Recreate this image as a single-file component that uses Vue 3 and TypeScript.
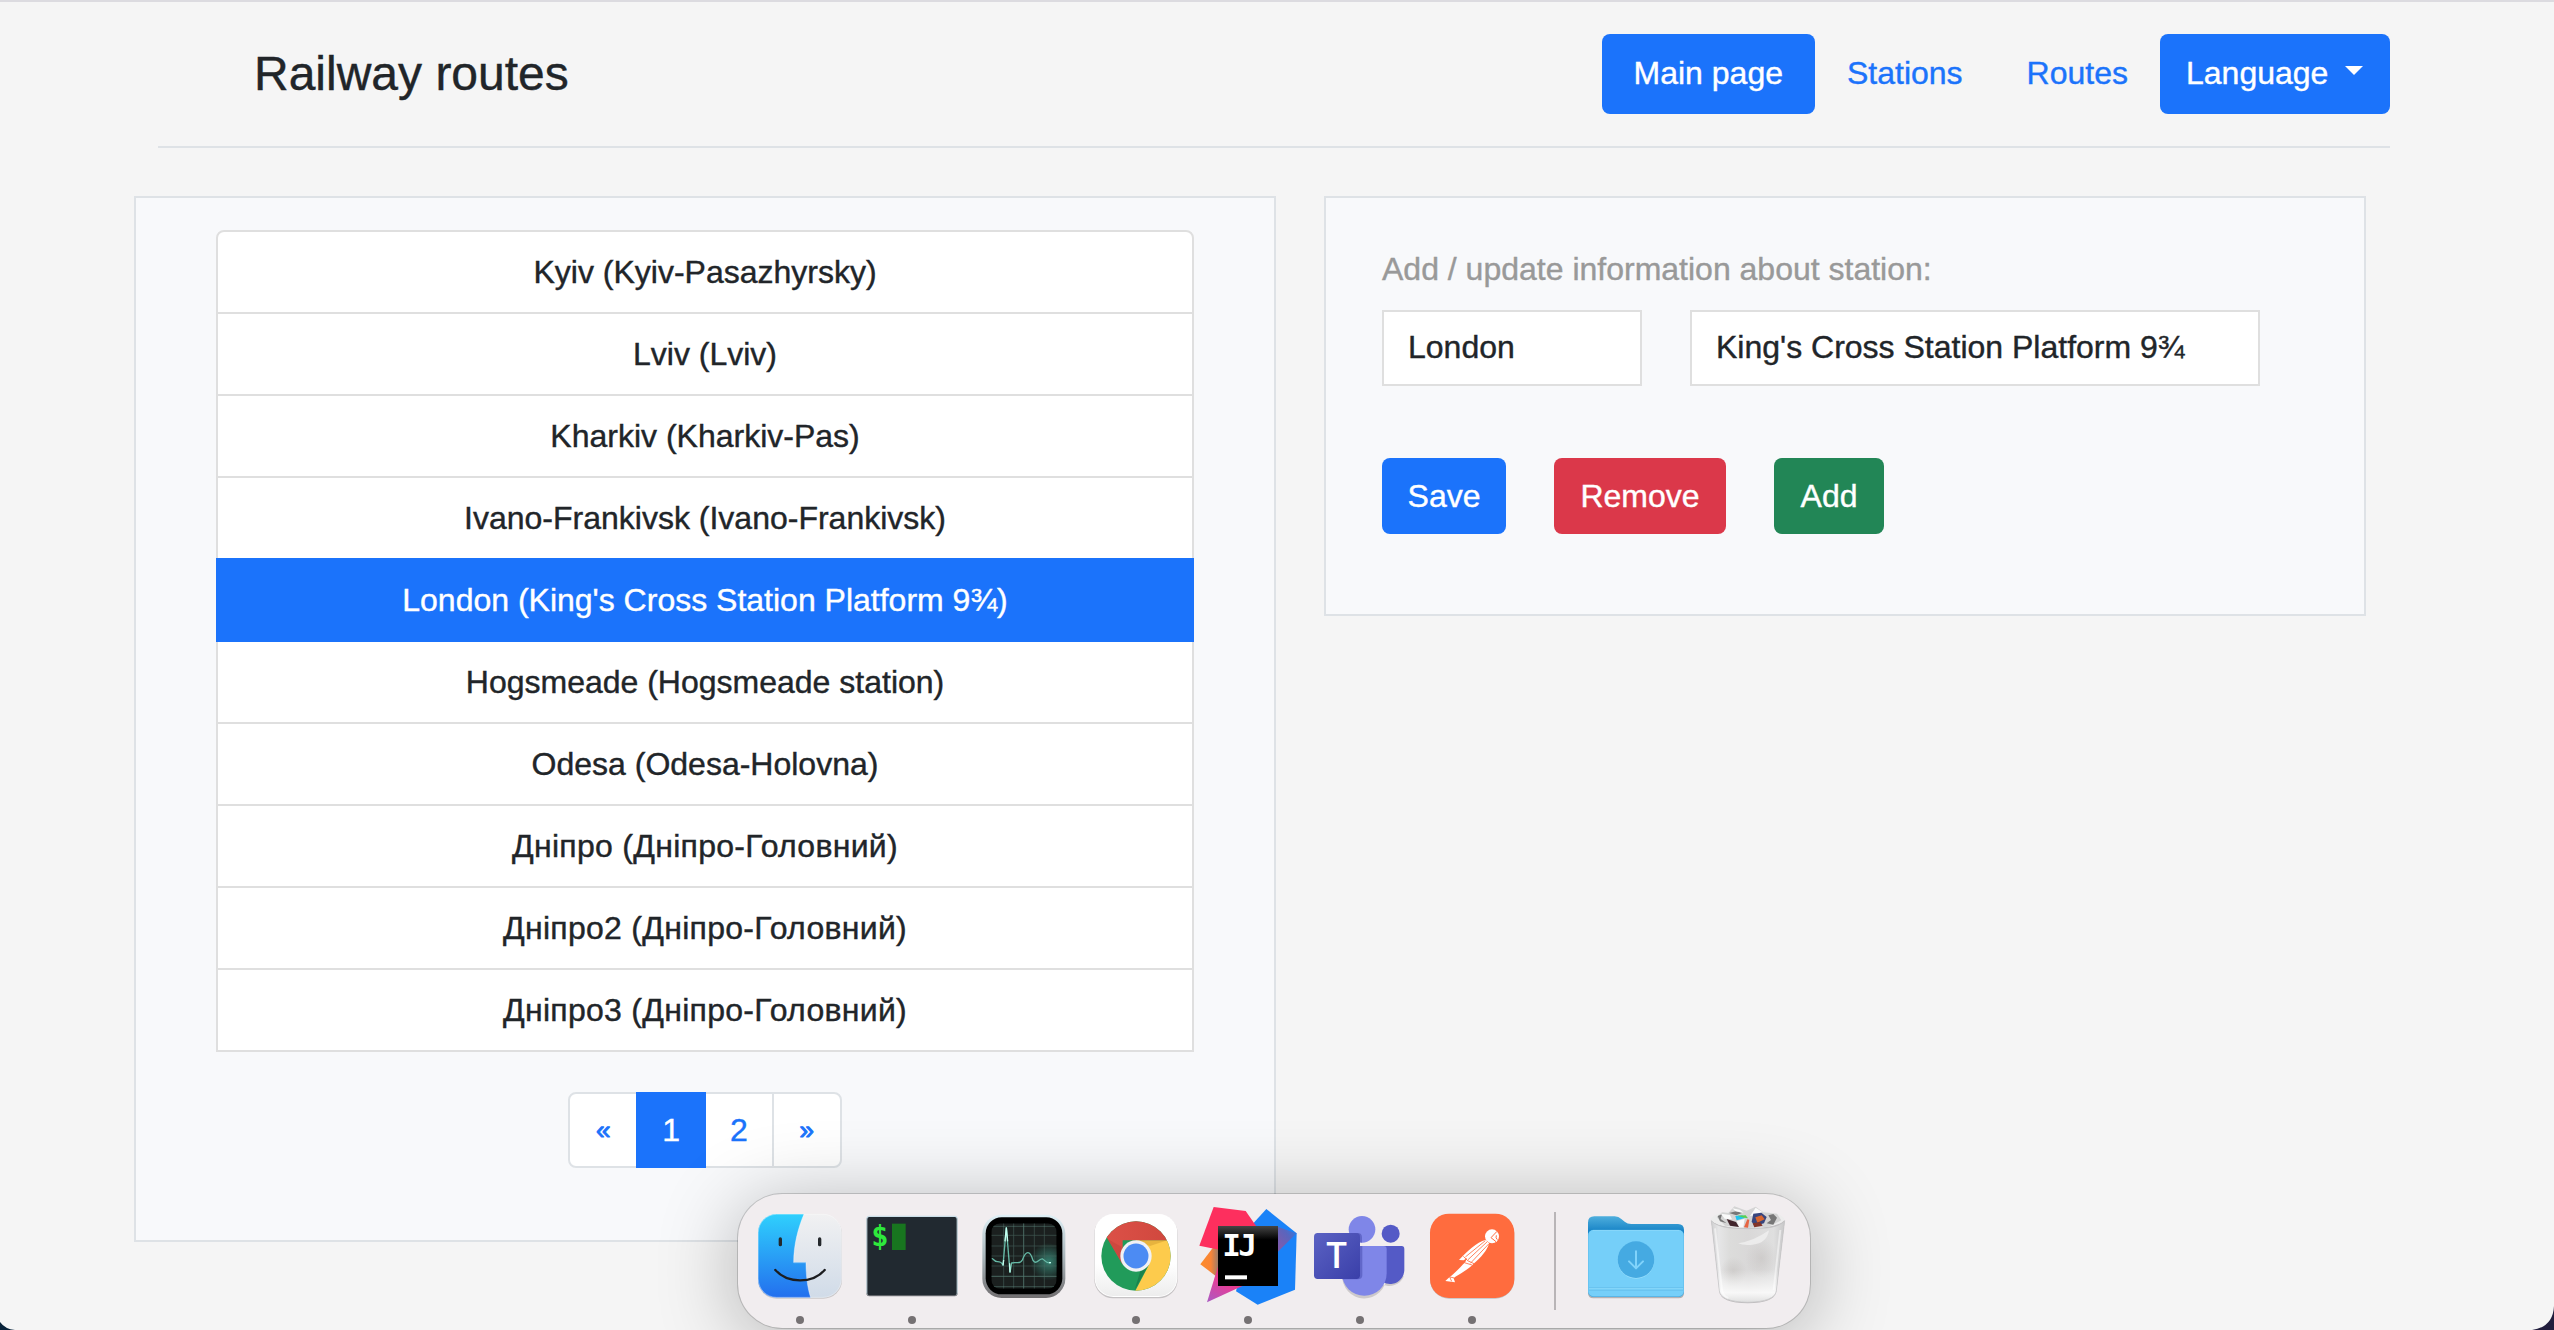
<script setup lang="ts">
import { ref } from 'vue'

interface Station {
  city: string
  name: string
}

const stations: Station[] = [
  { city: 'Kyiv', name: 'Kyiv-Pasazhyrsky' },
  { city: 'Lviv', name: 'Lviv' },
  { city: 'Kharkiv', name: 'Kharkiv-Pas' },
  { city: 'Ivano-Frankivsk', name: 'Ivano-Frankivsk' },
  { city: 'London', name: "King's Cross Station Platform 9¾" },
  { city: 'Hogsmeade', name: 'Hogsmeade station' },
  { city: 'Odesa', name: 'Odesa-Holovna' },
  { city: 'Дніпро', name: 'Дніпро-Головний' },
  { city: 'Дніпро2', name: 'Дніпро-Головний' },
  { city: 'Дніпро3', name: 'Дніпро-Головний' },
]

const selected = ref(4)
const page = ref('1')
const pages = ['«', '1', '2', '»']
const city = ref(stations[4].city)
const name = ref(stations[4].name)

function isCyrillic(text: string) {
  return /[А-я]/.test(text)
}

function select(index: number) {
  selected.value = index
  city.value = stations[index].city
  name.value = stations[index].name
}
</script>

<template>
  <div class="window">
    <header class="header">
      <h1 class="title">Railway routes</h1>
      <nav class="nav">
        <a class="nav-link filled">Main page</a>
        <a class="nav-link">Stations</a>
        <a class="nav-link">Routes</a>
        <button class="language">Language<span class="caret"></span></button>
      </nav>
    </header>

    <main class="main">
      <section class="panel list-panel">
        <ul class="stations">
          <li
            v-for="(s, i) in stations"
            :key="i"
            :class="['station', { active: i === selected, cyrillic: isCyrillic(s.city) }]"
            @click="select(i)"
          >{{ s.city }} ({{ s.name }})</li>
        </ul>
        <ul class="pagination">
          <li
            v-for="p in pages"
            :key="p"
            :class="['page', { active: p === page, arrow: p === '«' || p === '»' }]"
          >{{ p }}</li>
        </ul>
      </section>

      <section class="panel form-panel">
        <label class="form-label">Add / update information about station:</label>
        <div class="fields">
          <input v-model="city" class="field city" type="text" />
          <input v-model="name" class="field name" type="text" />
        </div>
        <div class="actions">
          <button class="btn save">Save</button>
          <button class="btn remove">Remove</button>
          <button class="btn add">Add</button>
        </div>
      </section>
    </main>

    <div class="dock">
      <!-- Finder -->
      <svg class="slot" viewBox="42 42 336 402">
        <defs>
          <linearGradient id="fBlue" x1="0" y1="0" x2="0" y2="1"><stop offset="0" stop-color="#2fd0fd" /><stop offset="1" stop-color="#236fee" /></linearGradient>
          <linearGradient id="fGrey" x1="0" y1="0" x2="0" y2="1"><stop offset="0" stop-color="#f1f1f2" /><stop offset="1" stop-color="#d0dbe8" /></linearGradient>
          <clipPath id="fClip"><rect x="84" y="102" width="251" height="251" rx="56" /></clipPath>
        </defs>
        <rect x="84" y="105" width="252" height="251" rx="56" fill="#000" opacity=".16" />
        <rect x="84" y="102" width="251" height="251" rx="56" fill="url(#fGrey)" />
        <path d="M84 102H222C204 145 191 195 191 247H228C228 290 233 325 242 353H84Z" fill="url(#fBlue)" clip-path="url(#fClip)" />
        <path d="M222 102C204 145 191 195 191 248H228C228 290 233 325 242 353" fill="none" stroke="#fff" stroke-width="2" opacity=".6" />
        <rect x="85" y="103" width="249" height="249" rx="55" fill="none" stroke="#fff" stroke-width="2" opacity=".5" />
        <path d="M151 177V194M269 177V194" stroke="#24282c" stroke-width="10" stroke-linecap="round" />
        <path d="M136 270C172 311 248 312 284 270" fill="none" stroke="#1c1d20" stroke-width="7" stroke-linecap="round" />
        <circle class="dot" cx="210" cy="420" r="12" />
      </svg>

      <!-- Terminal -->
      <svg class="slot" viewBox="378 42 336 402">
        <rect x="409" y="110" width="274" height="239" rx="9" fill="#77797d" />
        <rect x="409" y="107" width="274" height="238" rx="9" fill="#cbdfe8" />
        <rect x="412" y="111" width="268" height="235" rx="6" fill="#212930" />
        <text x="423.500" y="197" font-family="'DejaVu Sans Mono', monospace" font-weight="bold" font-size="86" fill="#2ee83c">$</text>
        <rect x="486" y="131" width="41" height="79" fill="#18751f" />
        <circle class="dot" cx="546" cy="420" r="12" />
      </svg>

      <!-- Activity monitor -->
      <svg class="slot" viewBox="714 42 336 402">
        <defs>
          <linearGradient id="mRim" x1="0" y1="0" x2="0" y2="1"><stop offset="0" stop-color="#dff0f6" /><stop offset=".5" stop-color="#a9b6bb" /><stop offset="1" stop-color="#716e70" /></linearGradient>
          <radialGradient id="mGlow"><stop offset="0" stop-color="#3f9c88" stop-opacity=".75" /><stop offset="1" stop-color="#3f9c88" stop-opacity="0" /></radialGradient>
          <clipPath id="mClip"><rect x="784" y="130" width="196" height="196" rx="26" /></clipPath>
        </defs>
        <rect x="757" y="104" width="249" height="250" rx="58" fill="url(#mRim)" />
        <rect x="767" y="112" width="230" height="231" rx="48" fill="#000" />
        <g clip-path="url(#mClip)">
          <rect x="784" y="130" width="196" height="196" fill="#1c2221" />
          <circle cx="956" cy="245" r="56" fill="url(#mGlow)" />
          <path d="M784 166H980M784 198H980M784 228H980M784 258H980M784 289H980M821 130V326M851 130V326M881 130V326M913 130V326M943 130V326" stroke="#4d6d65" stroke-width="2" opacity=".75" />
          <path d="M784 139H980M784 320H980M881 130V326M784 289H980" stroke="#5d8a7d" stroke-width="2" opacity=".7" />
          <path d="M785 235C793 237 792 245 802 245S815 247 819 256L829 143L840 277L845 249C860 244 870 255 877 240C888 210 900 211 909 241C920 257 928 234 938 237C945 240 948 252 962 248" fill="none" stroke="#65b9a6" stroke-width="4" stroke-linejoin="round" />
          <path d="M825 184L829 143L833 184M819 256L821 240M840 277L839 250M957 248H963" fill="none" stroke="#c4fff0" stroke-width="4" />
        </g>
      </svg>

      <!-- Chrome -->
      <svg class="slot" viewBox="0 42 336 402">
        <defs>
          <linearGradient id="cBg" x1="0" y1="0" x2="0" y2="1"><stop offset="0" stop-color="#fff" /><stop offset=".6" stop-color="#fff" /><stop offset="1" stop-color="#ededed" /></linearGradient>
          <linearGradient id="cRed" x1="0" y1="0" x2="1" y2="0"><stop offset="0" stop-color="#dd5148" /><stop offset="1" stop-color="#cf473d" /></linearGradient>
          <clipPath id="cClip"><circle cx="168" cy="228" r="104" /></clipPath>
        </defs>
        <rect x="43" y="105" width="250" height="250" rx="56" fill="#000" opacity=".18" />
        <rect x="44" y="102" width="248" height="249" rx="56" fill="#fff" />
        <rect x="46" y="104" width="244" height="244" rx="54" fill="url(#cBg)" />
        <g clip-path="url(#cClip)">
          <rect x="60" y="120" width="216" height="216" fill="#219b5a" />
          <path d="M168 181H280V340H162L207 254Z" fill="#fdcb4c" />
          <path d="M60 170L80 172L128 254L128 181H280V110H60Z" fill="url(#cRed)" />
          <path d="M82 176L124 246V200Z" fill="#b53c34" opacity=".35" />
          <path d="M168 181H262L210 198Z" fill="#b57d1d" opacity=".3" />
          <path d="M206 254L164 330L180 276Z" fill="#13633c" opacity=".45" />
        </g>
        <circle cx="168" cy="228" r="47" fill="#f1f1f4" />
        <circle cx="168" cy="228" r="37.500" fill="#4c8bf3" />
        <circle class="dot" cx="168" cy="420" r="12" />
      </svg>

      <!-- IntelliJ IDEA -->
      <svg class="slot" viewBox="336 42 336 402">
        <defs>
          <linearGradient id="iOr" x1="0" y1="0" x2="1" y2="0"><stop offset="0" stop-color="#fd8b2a" /><stop offset=".55" stop-color="#f98536" /><stop offset="1" stop-color="#8d7a70" /></linearGradient>
          <linearGradient id="iPk" x1="0" y1="1" x2=".5" y2="0"><stop offset="0" stop-color="#a95bc4" /><stop offset=".5" stop-color="#e0409c" /><stop offset="1" stop-color="#fd2f5e" /></linearGradient>
          <linearGradient id="iVi" x1="0" y1="1" x2="1" y2="0"><stop offset="0" stop-color="#8858a8" /><stop offset=".6" stop-color="#5a65bd" /><stop offset="1" stop-color="#1f80f0" /></linearGradient>
          <linearGradient id="iBk" x1="0" y1="0" x2="0" y2="1"><stop offset="0" stop-color="#454545" /><stop offset=".23" stop-color="#000" /></linearGradient>
        </defs>
        <path d="M398 204L361 253L418 296V204Z" fill="url(#iOr)" />
        <path d="M559 87L650 160L645 329L533 374L468 334L520 130Z" fill="#1a82f8" />
        <path d="M592 140L650 160L592 217Z" fill="url(#iVi)" />
        <path d="M401 81L497 93L531 142L470 220L358 197Z" fill="#fd2f5e" />
        <path d="M420 240L381 367L492 316Z" fill="url(#iPk)" />
        <rect x="414" y="138" width="180" height="180" fill="url(#iBk)" />
        <text x="427" y="228" font-family="'DejaVu Sans Mono', monospace" font-weight="bold" font-size="93" textLength="104" fill="#fff">IJ</text>
        <rect x="435" y="286" width="66" height="12" fill="#fff" />
        <circle class="dot" cx="504" cy="420" r="12" />
      </svg>

      <!-- Teams -->
      <svg class="slot" viewBox="672 42 336 402">
        <defs>
          <linearGradient id="tSq" x1="0" y1="0" x2="1" y2="1"><stop offset="0" stop-color="#5b62c3" /><stop offset="1" stop-color="#3a3fa9" /></linearGradient>
        </defs>
        <path d="M786 280A66 68 0 0 0 920 285H972A48 48 0 0 1 905 308A67 67 0 0 1 786 280" fill="#000" opacity=".15" transform="translate(0 4)" />
        <circle cx="932" cy="161" r="27" fill="#545ac6" />
        <path d="M890 198H965Q973 198 973 207V270A43 43 0 0 1 890 285Z" fill="#545ac6" />
        <circle cx="846" cy="148" r="40" fill="#7f86e8" />
        <path d="M786 198H911Q920 198 920 208V280A67 67 0 0 1 786 280Z" fill="#7f86e8" />
        <path d="M806 159H833Q846 159 846 172V188Q820 188 806 159M786 298H833Q847 298 847 286V198H840" fill="#3d43a5" opacity=".45" />
        <rect x="702" y="159" width="138" height="138" rx="11" fill="url(#tSq)" />
        <text x="739" y="265" font-family="'Open Sans', sans-serif" font-weight="600" font-size="106" textLength="62" lengthAdjust="spacingAndGlyphs" fill="#fff">T</text>
        <circle class="dot" cx="840" cy="420" r="12" />
      </svg>

      <!-- Postman -->
      <svg class="slot" viewBox="48 42 336 402">
        <rect x="90" y="104" width="253" height="252" rx="57" fill="#000" opacity=".2" />
        <rect x="90" y="101" width="253" height="253" rx="57" fill="#ff6c3e" />
        <circle cx="276" cy="169" r="21" fill="#fff" />
        <path d="M291 154L273 173L288 185M289 166Q286 174 292 179" fill="none" stroke="#ff6c3e" stroke-width="3" />
        <path d="M258 179C228 188 204 211 177 240L191 241L201 234L196 246C179 264 160 283 148 292L136 303L165 307L161 295L166 290C187 278 209 264 220 252C243 233 262 211 267 190Z" fill="#fff" />
        <path d="M263 184L203 240M256 182L196 231M266 192L211 250M190 229L203 242L222 251M193 248L216 255M149 291L155 304M150 291L163 294" fill="none" stroke="#ff6c3e" stroke-width="2.500" />
        <circle class="dot" cx="216" cy="420" r="12" />
      </svg>

      <svg class="slot divider" viewBox="384 42 156 402">
        <rect x="462" y="96" width="6" height="294" fill="#b9b5b7" />
      </svg>

      <!-- Downloads folder -->
      <svg class="slot" viewBox="540 42 336 402">
        <defs>
          <linearGradient id="dBack" x1="0" y1="0" x2="0" y2="1"><stop offset="0" stop-color="#4eaedd" /><stop offset=".5" stop-color="#1783c6" /><stop offset="1" stop-color="#117fc3" /></linearGradient>
        </defs>
        <path d="M564 160H852V340Q852 355 836 355H580Q564 355 564 340Z" fill="#000" opacity=".25" />
        <path d="M564 128Q564 109 583 109H644Q656 109 664 117L674 125Q682 132 694 132H834Q852 132 852 150V200H564Z" fill="url(#dBack)" />
        <rect x="564" y="150" width="288" height="201" rx="16" fill="#50aee0" />
        <rect x="565" y="150" width="286" height="199" rx="15" fill="#75cff9" />
        <path d="M567 323H849M567 331H849" stroke="#60bbea" stroke-width="2" />
        <path d="M567 326H849M578 151H838" stroke="#94ddfc" stroke-width="2" />
        <circle cx="708" cy="241" r="55" fill="#9be0fd" />
        <circle cx="708" cy="239" r="55" fill="#45aae2" />
        <path d="M708 214V264M687 244L708 265L729 244" fill="none" stroke="#81d3fb" stroke-width="6" stroke-linecap="round" stroke-linejoin="round" />
      </svg>

      <!-- Trash -->
      <svg class="slot" viewBox="876 42 336 402">
        <defs>
          <linearGradient id="bin" x1="0" y1="0" x2="1" y2="0"><stop offset="0" stop-color="#cfcfd0" /><stop offset=".1" stop-color="#e6e6e7" /><stop offset=".25" stop-color="#dcdcdb" /><stop offset=".5" stop-color="#d9d8d8" /><stop offset=".85" stop-color="#dfdfdf" /><stop offset="1" stop-color="#c8c8c9" /></linearGradient>
          <linearGradient id="binLow" x1="0" y1="0" x2="0" y2="1"><stop offset=".6" stop-color="#fff" stop-opacity="0" /><stop offset=".88" stop-color="#fff" stop-opacity=".8" /><stop offset="1" stop-color="#dedede" /></linearGradient>
          <radialGradient id="binTint"><stop offset="0" stop-color="#b9b4b2" stop-opacity=".4" /><stop offset="1" stop-color="#b9b4b2" stop-opacity="0" /></radialGradient>
        </defs>
        <path d="M934 122L958 335Q962 368 1043 370Q1124 368 1129 335L1154 122Z" fill="#000" opacity=".2" />
        <ellipse cx="1043" cy="118" rx="110" ry="27" fill="#ececec" />
        <path d="M950 112L966 97L985 99L1003 79L1040 92L1067 80L1090 97L1131 101L1144 121L1105 140L1043 144L975 137Z" fill="#d4d4d4" />
        <path d="M953 108L966 103L962 117L980 130L960 124ZM1105 106L1120 102L1131 113L1120 134L1100 130L1113 120ZM987 99L1008 94L1026 99L1009 106Z" fill="#777" />
        <path d="M980 117L1008 126L1017 141L990 137Z" fill="#42252c" />
        <path d="M997 85L1019 89L1031 98L1007 94ZM963 101L990 105L996 118L974 116ZM1050 108L1067 83L1087 96L1066 105ZM1010 124L1034 116L1030 142H1018Z" fill="#fafafa" />
        <path d="M1006 108L1027 106L1035 114L1010 121Z" fill="#21c3ef" />
        <path d="M1012 107L1037 106L1044 115L1032 113Z" fill="#58cf4f" />
        <path d="M1042 118L1048 119L1044 143L1032 142Z" fill="#e66543" />
        <path d="M1060 101L1084 98L1100 111L1092 130L1064 138L1055 125Z" fill="#39467e" />
        <path d="M1066 112L1085 106L1094 118L1072 128Z" fill="#d9662f" />
        <path d="M1058 130L1080 126L1088 137L1063 142Z" fill="#833428" />
        <path d="M934 122Q948 139 990 144Q1043 148 1100 144Q1142 139 1154 122L1129 332Q1125 365 1043 367Q962 365 958 332Z" fill="url(#bin)" />
        <ellipse cx="1000" cy="275" rx="40" ry="45" fill="url(#binTint)" />
        <ellipse cx="1085" cy="235" rx="48" ry="60" fill="url(#binTint)" />
        <path d="M934 122Q948 139 990 144Q1043 148 1100 144Q1142 139 1154 122L1129 332Q1125 365 1043 367Q962 365 958 332Z" fill="url(#binLow)" stroke="#c2c2c4" stroke-width="2" />
        <path d="M1014 190Q1062 183 1107 151Q1101 190 1058 194Q1030 197 1014 190" fill="#f0f0f0" opacity=".8" />
        <path d="M945 145L966 330Q970 350 985 354M1141 150L1121 330" fill="none" stroke="#fff" stroke-width="6" opacity=".5" />
      </svg>
    </div>

    <svg class="corner left" viewBox="0 0 16 8"><path d="M0 0Q5 7 15 8H0Z" fill="#08233a" /></svg>
    <svg class="corner right" viewBox="0 0 22 24"><path d="M22 0Q21 21 0 24H22Z" fill="#211d3d" /></svg>
  </div>
</template>

<style>
body {
  margin: 0;
  overflow: hidden;
}
</style>

<style scoped>
.window {
  position: relative;
  box-sizing: border-box;
  width: 2554px;
  height: 1330px;
  overflow: hidden;
  border-top: 2px solid #dcdbe0;
  background: #f5f5f5;
  color: #212529;
  font-family: "Liberation Sans", Helvetica, Arial, sans-serif;
  font-size: 32px;
  line-height: 48px;
  -webkit-text-stroke-width: 0.4px;
}
.window svg {
  -webkit-text-stroke-width: 0;
}
.header {
  display: flex;
  justify-content: space-between;
  align-items: center;
  margin: 0 164px 0 158px;
  padding: 32px 0;
  border-bottom: 2px solid #dee2e6;
}
.title {
  margin: 0 0 0 96px;
  font-size: 48px;
  font-weight: 400;
  line-height: 72px;
}
.nav {
  display: flex;
}
.nav-link {
  padding: 15px 32px 17px;
  border-radius: 8px;
  color: #1b73fb;
}
.nav-link.filled {
  background: #1b73fb;
  color: #fff;
}
button {
  border: 0;
  font: inherit;
  color: #fff;
}
.language {
  display: flex;
  align-items: center;
  box-sizing: border-box;
  width: 230px;
  padding: 0 0 2px 26px;
  border-radius: 8px;
  background: #1b73fb;
}
.caret {
  margin: -5px 0 0 17px;
  border: 9.6px solid transparent;
  border-top-color: #fff;
  border-bottom: 0;
}
.main {
  display: flex;
  align-items: flex-start;
  gap: 48px;
  margin: 48px 0 0 134px;
}
.panel {
  box-sizing: border-box;
  border: 2px solid #dee2e6;
  background: #f8f9fb;
}
.list-panel {
  width: 1142px;
  height: 1046px;
  padding: 32px 80px;
}
.stations,
.pagination {
  margin: 0;
  padding: 0;
  list-style: none;
}
.station {
  padding: 16px 32px;
  border: 2px solid #dfdfdf;
  border-top-width: 0;
  background: #fff;
  text-align: center;
}
.station.cyrillic {
  letter-spacing: 0.28px;
}
.station:first-child {
  border-top-width: 2px;
  border-radius: 8px 8px 0 0;
}
.station.active {
  margin-top: -2px;
  border-top-width: 2px;
}
.station.active,
.page.active {
  position: relative;
  border-color: #1b73fb;
  background: #1b73fb;
  color: #fff;
}
.pagination {
  display: flex;
  justify-content: center;
  margin-top: 40px;
}
.page {
  box-sizing: border-box;
  width: 69.8px;
  height: 76px;
  padding: 12px 0;
  border: 2px solid #dee2e6;
  background: #fff;
  color: #1b73fb;
  text-align: center;
}
.page.arrow {
  font-size: 26px;
  -webkit-text-stroke-width: 1px;
}
.page + .page {
  margin-left: -2px;
}
.page:first-child {
  border-radius: 8px 0 0 8px;
}
.page:last-child {
  border-radius: 0 8px 8px 0;
}
.form-panel {
  width: 1042px;
  height: 420px;
  padding: 47px 56px;
}
.form-label {
  display: block;
  color: #999;
}
.fields,
.actions {
  display: flex;
  gap: 48px;
}
.fields {
  margin-top: 17px;
}
.field {
  box-sizing: border-box;
  height: 76px;
  padding: 0 24px 1px;
  border: 2px solid #dfdfdf;
  border-radius: 0;
  background: #fff;
  color: #212529;
  font: inherit;
  -webkit-text-stroke-width: 0.4px;
}
.city {
  width: 260px;
}
.name {
  width: 570px;
}
.actions {
  margin-top: 72px;
}
.btn {
  height: 76px;
  padding: 0 0 1px;
  border-radius: 8px;
}
.save {
  width: 124px;
  background: #1b73fb;
}
.remove {
  width: 172px;
  background: #db384a;
}
.add {
  width: 110px;
  background: #228656;
}
.dock {
  position: absolute;
  left: 738px;
  top: 1192px;
  display: flex;
  box-sizing: border-box;
  width: 1072px;
  height: 134px;
  padding: 0 6px;
  border-radius: 44px;
  background: #f1edef;
  box-shadow: 0 0 0 1px rgba(0, 0, 0, 0.16), 0 10px 80px rgba(0, 0, 0, 0.29);
}
.slot {
  flex: none;
  width: 112px;
  height: 134px;
}
.slot.divider {
  width: 52px;
}
.dot {
  fill: #757173;
}
.corner {
  position: absolute;
  bottom: 0;
}
.corner.left {
  left: 0;
  width: 16px;
  height: 8px;
}
.corner.right {
  right: 0;
  width: 22px;
  height: 24px;
}
</style>
